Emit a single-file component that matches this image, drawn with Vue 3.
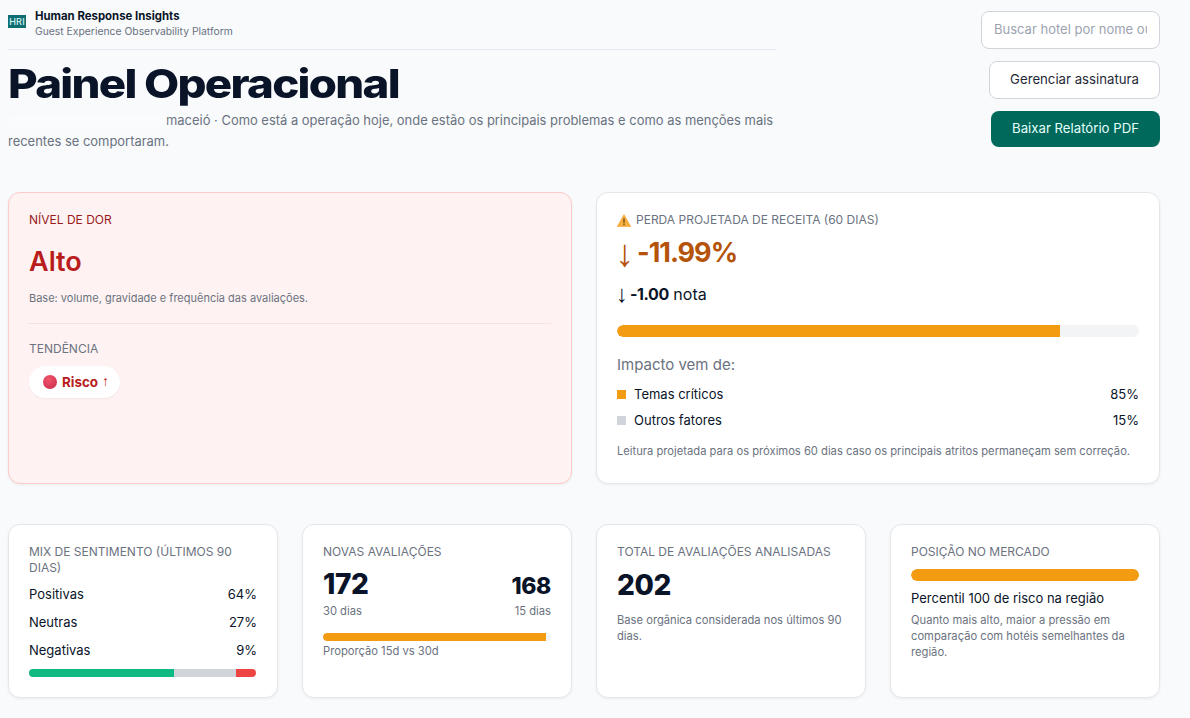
<script setup>
const sentiment = [
  { name: "Positivas", value: "64%" },
  { name: "Neutras", value: "27%" },
  { name: "Negativas", value: "9%" },
];
const impact = [
  { name: "Temas críticos", value: "85%", color: "#f39c12" },
  { name: "Outros fatores", value: "15%", color: "#d1d5db" },
];
</script>

<template>
  <div class="page">
    <header class="header">
      <div class="intro">
        <div class="brand">
          <div class="logo">HRI</div>
          <div>
            <div class="brand-name">Human Response Insights</div>
            <div class="brand-sub">Guest Experience Observability Platform</div>
          </div>
        </div>
        <h1 class="title">Painel Operacional</h1>
        <p class="lead"><span class="hidden-name"></span>maceió · Como está a operação hoje, onde estão os principais problemas e como as menções mais recentes se comportaram.</p>
      </div>
      <div class="actions">
        <input class="search" type="text" placeholder="Buscar hotel por nome ou cidade" />
        <button class="btn">Gerenciar assinatura</button>
        <button class="btn primary">Baixar Relatório PDF</button>
      </div>
    </header>

    <section class="row two">
      <div class="card pain">
        <div class="label red">NÍVEL DE DOR</div>
        <div class="level">Alto</div>
        <div class="small">Base: volume, gravidade e frequência das avaliações.</div>
        <div class="divider"></div>
        <div class="label">TENDÊNCIA</div>
        <div class="pill"><span class="dot"></span><b>Risco</b><span class="up">↑</span></div>
      </div>

      <div class="card loss">
        <div class="label warn">
          <svg width="14" height="13" viewBox="0 0 14 13">
            <path d="M7 .8 13.6 12.4H.4Z" fill="#f5b041" stroke="#f5b041" stroke-linejoin="round" />
            <rect x="6.3" y="4.2" width="1.4" height="4.6" fill="#7a4a12" />
            <rect x="6.3" y="9.6" width="1.4" height="1.5" fill="#7a4a12" />
          </svg>
          PERDA PROJETADA DE RECEITA (60 DIAS)
        </div>
        <div class="loss-value"><span class="arrow">↓</span>-11.99%</div>
        <div class="loss-note"><span class="arrow-sm">↓</span><span><b>-1.00</b> nota</span></div>
        <div class="bar"><div class="bar-fill" style="width: 84.8%"></div></div>
        <div class="impact-title">Impacto vem de:</div>
        <div v-for="item in impact" :key="item.name" class="impact-row">
          <span class="square" :style="{ background: item.color }"></span>
          <span class="grow">{{ item.name }}</span>
          <span>{{ item.value }}</span>
        </div>
        <div class="small foot">Leitura projetada para os próximos 60 dias caso os principais atritos permaneçam sem correção.</div>
      </div>
    </section>

    <section class="row four">
      <div class="card mini">
        <div class="label">MIX DE SENTIMENTO (ÚLTIMOS 90 DIAS)</div>
        <div class="mix-list">
          <div v-for="item in sentiment" :key="item.name" class="mix-row">
            <span>{{ item.name }}</span><span>{{ item.value }}</span>
          </div>
        </div>
        <div class="mix-bar">
          <span class="seg" style="width: 64%; background: #10b981"></span>
          <span class="seg" style="width: 27%; background: #d1d5db"></span>
          <span class="seg" style="width: 9%; background: #ef4444"></span>
        </div>
      </div>

      <div class="card mini">
        <div class="label">NOVAS AVALIAÇÕES</div>
        <div class="counts">
          <div>
            <div class="num big">172</div>
            <div class="small cap">30 dias</div>
          </div>
          <div class="right">
            <div class="num">168</div>
            <div class="small cap">15 dias</div>
          </div>
        </div>
        <div class="bar thin"><div class="bar-fill" style="width: 98%"></div></div>
        <div class="small ratio">Proporção 15d vs 30d</div>
      </div>

      <div class="card mini">
        <div class="label">TOTAL DE AVALIAÇÕES ANALISADAS</div>
        <div class="num big total">202</div>
        <div class="small body total-body">Base orgânica considerada nos últimos 90 dias.</div>
      </div>

      <div class="card mini">
        <div class="label">POSIÇÃO NO MERCADO</div>
        <div class="bar market"><div class="bar-fill" style="width: 100%"></div></div>
        <div class="percentile">Percentil 100 de risco na região</div>
        <div class="small body">Quanto mais alto, maior a pressão em comparação com hotéis semelhantes da região.</div>
      </div>
    </section>
  </div>
</template>

<style>
html, body {
  background: #f8fafc;
}
</style>

<style scoped>
.page {
  width: 1152px;
  padding: 0 30px 20px 8px;
  font-family: Inter, "Liberation Sans", sans-serif;
  color: #0a1428;
}

.header {
  display: flex;
  justify-content: space-between;
}

.intro {
  width: 768px;
}

.brand {
  display: flex;
  align-items: center;
  gap: 9px;
  height: 50px;
  padding: 8px 0 10px;
  box-sizing: border-box;
  border-bottom: 1px solid #e2e8f0;
}

.logo {
  width: 18px;
  height: 13px;
  margin-top: -4px;
  background: #0f6e72;
  color: #d5f5f2;
  font-size: 9px;
  font-weight: 500;
  line-height: 13px;
  letter-spacing: 0.2px;
  text-align: center;
}

.brand-name {
  font-size: 11.4px;
  font-weight: 700;
  line-height: 15px;
}

.brand-sub {
  font-size: 10.35px;
  line-height: 15px;
  color: #6b7280;
}

.title {
  margin: 13px 0 0;
  font-size: 40px;
  font-weight: 800;
  line-height: 42px;
  letter-spacing: -1.5px;
  white-space: nowrap;
  transform: scaleX(1.14);
  transform-origin: left;
}

.lead {
  margin: 5px 0 0;
  font-size: 12.95px;
  line-height: 21px;
  color: #6b7280;
}

.hidden-name {
  display: inline-block;
  width: 158px;
  height: 8px;
  background: rgba(255, 255, 255, 0.5);
  filter: blur(4px);
}

.actions {
  display: flex;
  flex-direction: column;
  align-items: flex-end;
  gap: 12px;
  padding-top: 11px;
}

.search {
  width: 179px;
  height: 38px;
  box-sizing: border-box;
  padding: 0 12px 2px;
  border: 1px solid #d1d5db;
  border-radius: 8px;
  background: #fff;
  font: 13px Inter, sans-serif;
}

.search::placeholder {
  color: #9ca3af;
}

.btn {
  height: 38px;
  width: 171px;
  padding-bottom: 4px;
  border: 1px solid #d1d5db;
  border-radius: 8px;
  background: #fff;
  color: #1f2937;
  font: 13.2px Inter, sans-serif;
}

.btn.primary {
  height: 36px;
  width: 169px;
  border: 0;
  background: #00695c;
  color: #e6fffa;
}

.row {
  display: grid;
  gap: 24px;
}

.two {
  grid-template-columns: 1fr 1fr;
  margin-top: 40px;
}

.four {
  grid-template-columns: repeat(4, 1fr);
  margin-top: 40px;
}

.card {
  box-sizing: border-box;
  border: 1px solid #e5e7eb;
  border-radius: 12px;
  background: #fff;
  box-shadow: 0 1px 3px rgba(15, 23, 42, 0.06);
}

.pain {
  height: 292px;
  padding: 19px 20px 20px;
  background: #fef2f2;
  border-color: #fecaca;
}

.loss {
  height: 292px;
  padding: 19px 20px 20px;
}

.mini {
  height: 174px;
  padding: 19px 20px 20px;
}

.label {
  font-size: 12px;
  line-height: 16px;
  color: #6b7280;
}

.label.red {
  color: #991b1b;
}

.label.warn {
  display: flex;
  align-items: center;
  gap: 5px;
}

.level {
  margin-top: 17px;
  font-size: 27px;
  font-weight: 600;
  line-height: 34px;
  color: #b91c1c;
}

.small {
  font-size: 11.2px;
  line-height: 15px;
  color: #6b7280;
}

.pain .small {
  margin-top: 12px;
  font-size: 11px;
}

.divider {
  height: 1px;
  margin: 17px 0;
  background: #f3e3e3;
}

.pill {
  display: inline-flex;
  align-items: center;
  gap: 5px;
  height: 32px;
  margin-top: 9px;
  padding: 0 11px 0 14px;
  border-radius: 16px;
  background: #fff;
  font-size: 13.4px;
  color: #b91c1c;
  box-shadow: 0 1px 2px rgba(15, 23, 42, 0.05);
}

.dot {
  width: 14px;
  height: 14px;
  border-radius: 50%;
  background: radial-gradient(circle at 40% 30%, #f0556b, #c92a4a);
}

.up {
  font-size: 14px;
  margin-left: -1px;
  font-family: "Liberation Serif", serif;
}

.loss-value {
  display: flex;
  align-items: center;
  gap: 4px;
  margin-top: 7px;
  font-size: 27px;
  font-weight: 700;
  line-height: 36px;
  letter-spacing: -1px;
  color: #b45309;
}

.arrow {
  margin-left: -2px;
  font-size: 38px;
  font-weight: 400;
  line-height: 36px;
  font-family: "Liberation Serif", serif;
}

.loss-note {
  display: flex;
  align-items: center;
  gap: 2px;
  margin-top: 12px;
  font-size: 16px;
  line-height: 22px;
}

.loss-note b {
  letter-spacing: -0.4px;
}

.arrow-sm {
  margin-left: -1px;
  font-family: "Liberation Serif", serif;
  font-size: 24px;
  line-height: 22px;
}

.bar {
  height: 12px;
  margin-top: 20px;
  border-radius: 6px;
  background: #f3f4f6;
  overflow: hidden;
}

.bar-fill {
  height: 100%;
  border-radius: 6px 0 0 6px;
  background: #f39c12;
}

.impact-title {
  margin-top: 17px;
  margin-bottom: 5px;
  font-size: 15px;
  line-height: 22px;
  color: #6b7280;
}

.impact-row {
  display: flex;
  align-items: center;
  height: 26px;
  font-size: 13px;
}

.square {
  width: 9px;
  height: 9px;
  margin-right: 8px;
}

.grow {
  flex: 1;
}

.foot {
  margin-top: 11px;
}

.mix-list {
  margin-top: 4px;
}

.mix-row {
  display: flex;
  justify-content: space-between;
  font-size: 13px;
  line-height: 28px;
}

.mix-bar {
  display: flex;
  height: 8px;
  margin: 5px 1px 0 0;
  border-radius: 4px;
  overflow: hidden;
}

.seg {
  display: block;
}

.counts {
  display: flex;
  justify-content: space-between;
  align-items: flex-end;
  margin-top: 7px;
}

.right {
  text-align: right;
}

.num {
  font-size: 23px;
  font-weight: 800;
  line-height: 30px;
  letter-spacing: -0.4px;
}

.num.big {
  font-size: 28px;
  line-height: 34px;
}

.cap {
  margin-top: 3px;
}

.bar.thin {
  height: 8px;
  margin-top: 14px;
}

.ratio {
  margin-top: 3px;
}

.total {
  margin-top: 8px;
}

.body {
  line-height: 16px;
  margin-top: 5px;
}

.total-body {
  margin-top: 10px;
}

.bar.market {
  margin-top: 9px;
}

.percentile {
  margin-top: 8px;
  font-size: 13px;
  line-height: 18px;
}
</style>
